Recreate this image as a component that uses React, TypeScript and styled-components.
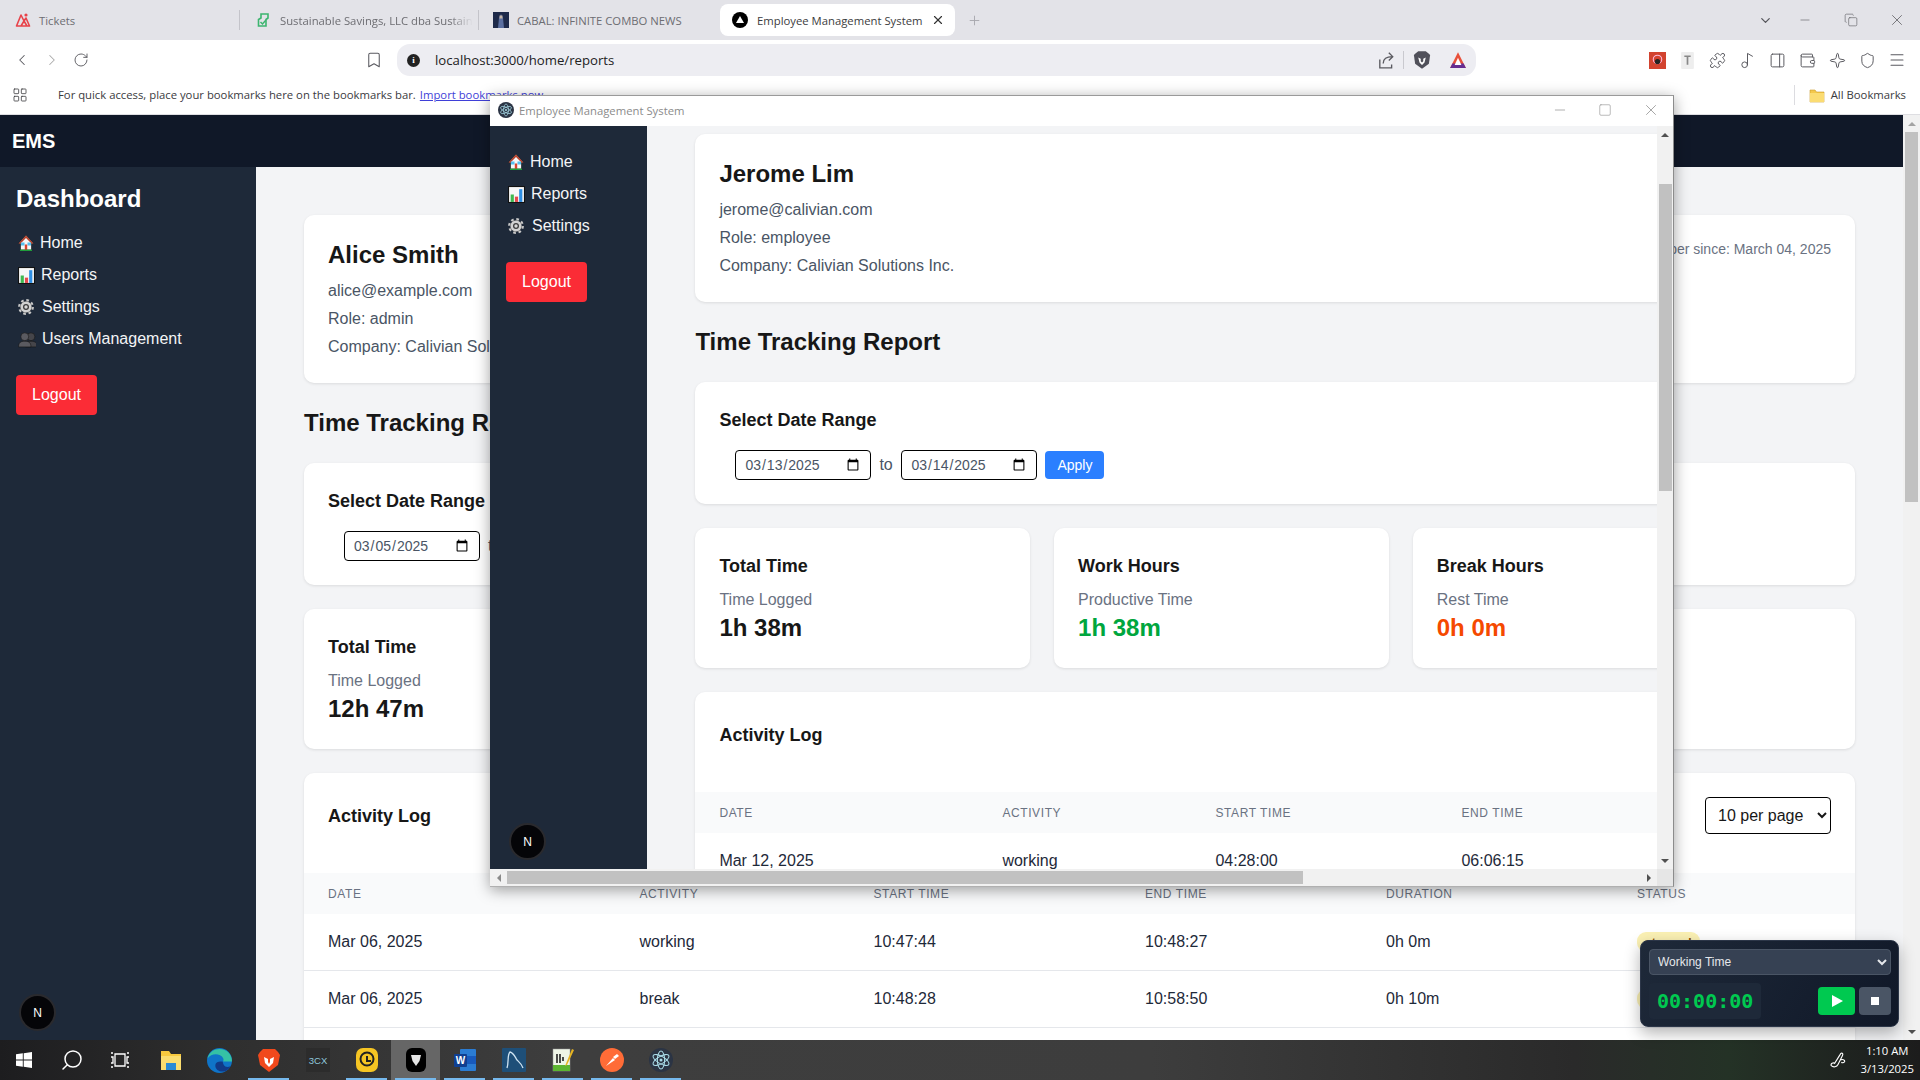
import React from "react";
import styled, { createGlobalStyle } from "styled-components";
import {
  ChevronLeft, ChevronRight, RotateCw, Bookmark, Puzzle, Music2, PanelRight, Wallet,
  Sparkle, Shield, Menu, Minus, Square, Copy, X, ChevronDown, Plus, LayoutGrid, Search,
} from "lucide-react";

const GlobalStyle = createGlobalStyle`
  html, body { margin: 0; padding: 0; overflow: hidden; background: #fff; }
  body { font-family: "Liberation Sans", Arial, sans-serif; }
  * { box-sizing: border-box; }
`;

/* ---------- Screen ---------- */
const Screen = styled.div`
  position: relative;
  width: 1920px;
  height: 1080px;
  display: flex;
  flex-direction: column;
  overflow: hidden;
`;

/* ---------- Browser chrome ---------- */
const TabStrip = styled.div`
  height: 40px;
  background: #e3e3e8;
  display: flex;
  align-items: center;
  font-family: "Open Sans", "Noto Sans", sans-serif;
  font-size: 11.3px;
  color: #6d6d72;
`;
const Tab = styled.div<{ $w: number; $sep?: boolean; $pad: number }>`
  width: ${(p) => p.$w}px;
  height: 20px;
  padding-left: ${(p) => p.$pad}px;
  display: flex;
  align-items: center;
  gap: 8px;
  white-space: nowrap;
  overflow: hidden;
  border-right: ${(p) => (p.$sep ? "1px solid #c4c4ca" : "none")};
`;
const TabLabel = styled.span<{ $fade?: boolean }>`
  display: block;
  ${(p) => (p.$fade ? "mask-image: linear-gradient(90deg, #000 88%, transparent 100%);" : "")}
`;
const ActiveTab = styled.div`
  width: 235px;
  height: 32px;
  margin-left: 8px;
  padding: 0 10px 0 12px;
  background: #fff;
  border-radius: 8px;
  display: flex;
  align-items: center;
  gap: 9px;
  color: #3c3c40;
  white-space: nowrap;
`;
const TabClose = styled.span`
  margin-left: auto;
  display: flex;
  color: #333;
`;
const NewTab = styled.span`
  margin-left: 12px;
  display: flex;
  align-items: center;
  color: #a8a8ae;
`;
const WindowButtons = styled.div`
  margin-left: auto;
  height: 40px;
  display: flex;
  align-items: center;
  color: #55555a;
`;
const WindowButton = styled.span<{ $w: number }>`
  width: ${(p) => p.$w}px;
  display: flex;
  justify-content: center;
`;
const Toolbar = styled.div`
  height: 40px;
  background: #fff;
  display: flex;
  align-items: center;
  color: #5a5a60;
`;
const NavCluster = styled.div`
  width: 397px;
  padding: 0 14px 0 13px;
  display: flex;
  align-items: center;
  gap: 12px;
`;
const BookmarkWrap = styled.span`
  margin-left: auto;
  display: flex;
`;
const AddressBar = styled.div`
  width: 1079px;
  height: 32px;
  background: #ededf2;
  border-radius: 13px;
  display: flex;
  align-items: center;
  padding: 0 9px 0 10px;
  font-family: "Open Sans", "Noto Sans", sans-serif;
  font-size: 13.2px;
  color: #222;
  gap: 15px;
`;
const InfoDot = styled.span`
  width: 13px;
  height: 13px;
  border-radius: 50%;
  background: #222;
  color: #fff;
  font: bold 9px/13px "Liberation Serif", serif;
  text-align: center;
`;
const AddressTools = styled.div`
  margin-left: auto;
  display: flex;
  align-items: center;
  gap: 8px;
`;
const ToolDivider = styled.span`
  width: 1px;
  height: 18px;
  background: #c9c9cf;
`;
const LionGap = styled.span`
  width: 1px;
`;
const Extensions = styled.div`
  flex: 1;
  display: flex;
  justify-content: flex-end;
  align-items: center;
  padding-right: 8px;
`;
const ExtSlot = styled.span`
  width: 30px;
  display: flex;
  justify-content: center;
`;
const BookmarksBar = styled.div`
  height: 35px;
  background: #fff;
  border-bottom: 1px solid #dedee2;
  display: flex;
  align-items: center;
  padding: 0 14px 5px 12px;
  font-family: "Open Sans", "Noto Sans", sans-serif;
  font-size: 11.3px;
  color: #3a3a3e;
  white-space: nowrap;
`;
const BookmarkHint = styled.span`
  margin-left: 30px;
`;
const ImportLink = styled.span`
  margin-left: 4px;
  color: #3f3fd8;
  text-decoration: underline;
`;
const AllBookmarks = styled.div`
  margin-left: auto;
  height: 20px;
  display: flex;
  align-items: center;
  gap: 6px;
  border-left: 1px solid #dcdce0;
  padding-left: 14px;
`;

/* ---------- Page ---------- */
const PageViewport = styled.div`
  flex: 1;
  min-height: 0;
  display: flex;
`;
const PageColumn = styled.div`
  flex: 1;
  min-width: 0;
  display: flex;
  flex-direction: column;
`;
const AppHeader = styled.header`
  height: 52px;
  background: #101828;
  color: #fff;
  padding: 0 12px;
  display: flex;
  align-items: center;
  font-size: 20px;
  font-weight: bold;
`;
const AppBody = styled.div`
  flex: 1;
  min-height: 0;
  display: flex;
`;
const Sidebar = styled.aside<{ $w: number; $top: number }>`
  position: relative;
  flex: 0 0 ${(p) => p.$w}px;
  width: ${(p) => p.$w}px;
  background: #1e2939;
  color: #fff;
  padding: ${(p) => p.$top}px 16px 0;
`;
const SideTitle = styled.h2`
  margin: 0 0 12px;
  font-size: 24px;
  line-height: 32px;
  font-weight: bold;
`;
const NavItem = styled.div<{ $gap: number }>`
  height: 32px;
  display: flex;
  align-items: center;
  padding-left: 2px;
  gap: ${(p) => p.$gap}px;
  font-size: 16px;
  color: #f3f4f6;
`;
const LogoutButton = styled.button`
  display: block;
  margin-top: 20px;
  width: 81px;
  height: 40px;
  border: 0;
  border-radius: 4px;
  background: #fb2c36;
  color: #fff;
  font: 16px "Liberation Sans", Arial, sans-serif;
`;
const DevBadge = styled.div`
  position: absolute;
  left: 19px;
  bottom: 9px;
  width: 37px;
  height: 37px;
  border-radius: 50%;
  background: #050508;
  border: 2px solid #2a2a2e;
  color: #fff;
  font-size: 12px;
  display: flex;
  align-items: center;
  justify-content: center;
`;
const Main = styled.main<{ $top: number }>`
  flex: 1;
  min-width: 0;
  background: #f3f4f6;
  padding: ${(p) => p.$top}px 48px 0;
  overflow: hidden;
`;
const MainInner = styled.div<{ $w?: number }>`
  width: ${(p) => (p.$w ? `${p.$w}px` : "100%")};
  display: flex;
  flex-direction: column;
  gap: 24px;
`;
const Card = styled.section`
  background: #fff;
  border-radius: 10px;
  box-shadow: 0 1px 3px rgba(0, 0, 0, 0.1);
  padding: 24px;
`;
const ProfileCard = styled(Card)`
  display: flex;
  justify-content: space-between;
  align-items: flex-start;
  height: 168px;
`;
const UserName = styled.h1`
  margin: 0 0 8px;
  font-size: 24px;
  line-height: 32px;
  font-weight: bold;
  color: #171717;
`;
const UserLine = styled.p`
  margin: 0 0 4px;
  font-size: 16px;
  line-height: 24px;
  color: #4a5565;
`;
const MemberSince = styled.span`
  font-size: 14px;
  line-height: 20px;
  color: #6a7282;
`;
const SectionTitle = styled.h2`
  margin: 0;
  font-size: 24px;
  line-height: 32px;
  font-weight: bold;
  color: #171717;
`;
const CardTitle = styled.h3`
  margin: 0;
  font-size: 18px;
  line-height: 28px;
  font-weight: bold;
  color: #171717;
`;
const DateRow = styled.div`
  margin-top: 16px;
  padding-left: 16px;
  display: flex;
  align-items: center;
  gap: 8px;
  font-size: 16px;
  color: #4a5565;
`;
const DateInput = styled.input`
  width: 136px;
  height: 30px;
  padding: 0 8px;
  border: 1px solid #000;
  border-radius: 4px;
  background: #fff;
  color: #4a5565;
  font: 14px "Liberation Sans", Arial, sans-serif;
`;
const RangeWord = styled.span`
  width: 14px;
`;
const ApplyButton = styled.button`
  height: 28px;
  padding: 0 12px;
  border: 0;
  border-radius: 4px;
  background: #2b7fff;
  color: #fff;
  font: 14px "Liberation Sans", Arial, sans-serif;
`;
const StatGrid = styled.div<{ $w?: number }>`
  width: ${(p) => (p.$w ? `${p.$w}px` : "100%")};
  display: grid;
  grid-template-columns: repeat(3, 1fr);
  gap: 24px;
`;
const StatNote = styled.div`
  margin-top: 8px;
  font-size: 16px;
  line-height: 24px;
  color: #6a7282;
`;
const StatValue = styled.div<{ $color: string }>`
  font-size: 24px;
  line-height: 32px;
  font-weight: bold;
  color: ${(p) => p.$color};
`;
const ActivityCard = styled.section`
  background: #fff;
  border-radius: 10px 10px 0 0;
  box-shadow: 0 1px 3px rgba(0, 0, 0, 0.1);
  padding-bottom: 24px;
`;
const ActivityHead = styled.div`
  height: 100px;
  padding: 24px 24px 0;
  display: flex;
  justify-content: space-between;
  align-items: flex-start;
`;
const ActivityTitle = styled(CardTitle)`
  line-height: 39px;
`;
const PerPage = styled.select`
  width: 126px;
  height: 37px;
  padding: 0 8px 0 8px;
  border: 1px solid #000;
  border-radius: 4px;
  background: #fff;
  color: #171717;
  font: 16px "Liberation Sans", Arial, sans-serif;
`;
const TableRow = styled.div<{ $cols: string; $head?: boolean }>`
  display: grid;
  grid-template-columns: ${(p) => p.$cols};
  align-items: center;
  padding-left: 24px;
  height: ${(p) => (p.$head ? 41 : 57)}px;
  background: ${(p) => (p.$head ? "#f9fafb" : "#fff")};
  border-bottom: ${(p) => (p.$head ? "none" : "1px solid #e5e7eb")};
  font-size: ${(p) => (p.$head ? 12 : 16)}px;
  letter-spacing: ${(p) => (p.$head ? "0.6px" : "0")};
  text-transform: ${(p) => (p.$head ? "uppercase" : "none")};
  color: ${(p) => (p.$head ? "#6a7282" : "#1e2939")};
`;
const StatusBadge = styled.span`
  justify-self: start;
  padding: 0 8px;
  height: 20px;
  line-height: 22px;
  border-radius: 9px;
  background: #fbf1b4;
  color: #894b00;
  font-size: 12px;
  font-weight: bold;
`;

/* ---------- Scrollbars ---------- */
const VTrack = styled.div<{ $w: number }>`
  flex: 0 0 ${(p) => p.$w}px;
  width: ${(p) => p.$w}px;
  background: #f1f1f1;
  display: flex;
  flex-direction: column;
`;
const VThumb = styled.div<{ $top: number; $h: number }>`
  margin: ${(p) => p.$top}px auto auto;
  width: 13px;
  height: ${(p) => p.$h}px;
  background: #c1c1c1;
`;
const ArrowBox = styled.div<{ $dir: "up" | "down" | "left" | "right"; $c: string }>`
  flex: 0 0 17px;
  width: ${(p) => (p.$dir === "up" || p.$dir === "down" ? "100%" : "17px")};
  height: ${(p) => (p.$dir === "up" || p.$dir === "down" ? "17px" : "100%")};
  display: flex;
  align-items: center;
  justify-content: center;
  &::before {
    content: "";
    width: 0;
    height: 0;
    border: 4px solid transparent;
    ${(p) =>
      p.$dir === "up"
        ? `border-bottom-color:${p.$c};border-top-width:0;`
        : p.$dir === "down"
        ? `border-top-color:${p.$c};border-bottom-width:0;`
        : p.$dir === "left"
        ? `border-right-color:${p.$c};border-left-width:0;`
        : `border-left-color:${p.$c};border-right-width:0;`}
  }
`;
const HTrack = styled.div`
  height: 17px;
  background: #f1f1f1;
  display: flex;
`;
const HThumb = styled.div<{ $w: number }>`
  width: ${(p) => p.$w}px;
  height: 13px;
  margin-top: 2px;
  margin-right: auto;
  background: #c1c1c1;
`;

/* ---------- Electron window (floating on the desktop) ---------- */
const AppWindow = styled.div`
  position: absolute;
  left: 490px;
  top: 95px;
  width: 1184px;
  height: 792px;
  background: #fff;
  border-top: 1px solid #9a9a9a;
  border-right: 1px solid #8c8c8c;
  border-bottom: 1px solid #b0b0b0;
  box-shadow: 0 3px 14px rgba(0, 0, 0, 0.38);
  display: flex;
  flex-direction: column;
`;
const WindowTitleBar = styled.div`
  height: 30px;
  flex: none;
  padding: 0 13px 2px 8px;
  display: flex;
  align-items: center;
  gap: 5px;
  background: #fff;
  font-family: "Open Sans", "Noto Sans", sans-serif;
  font-size: 11.3px;
  color: #8b8b8b;
`;
const WindowControls = styled.div`
  margin-left: auto;
  display: flex;
  align-items: center;
  gap: 30px;
  color: #8a8a8a;
`;
const WindowGrid = styled.div`
  flex: 1;
  min-height: 0;
  display: grid;
  grid-template-columns: 1fr 16px;
  grid-template-rows: 1fr 17px;
`;
const WindowApp = styled.div`
  min-width: 0;
  min-height: 0;
  display: flex;
  overflow: hidden;
`;
const ScrollCorner = styled.div`
  background: #e6e6e6;
`;

/* ---------- Timer widget ---------- */
const TimerWidget = styled.div`
  position: absolute;
  left: 1640px;
  top: 940px;
  width: 259px;
  height: 87px;
  padding: 8px 7px 0 8px;
  border-radius: 8px;
  border: 1px solid #2c3648;
  background: linear-gradient(120deg, #1e2939, #101828);
  box-shadow: 0 6px 16px rgba(0, 0, 0, 0.3);
  display: flex;
  flex-direction: column;
  gap: 8px;
`;
const TimerSelect = styled.select`
  width: 100%;
  height: 26px;
  flex: none;
  padding: 0 3px 0 4px;
  border: 1px solid #4a5565;
  border-radius: 4px;
  background: #364153;
  color: #e5e7eb;
  font: 12px "Liberation Sans", Arial, sans-serif;
`;
const TimerRow = styled.div`
  display: flex;
  align-items: center;
`;
const TimeDisplay = styled.div`
  width: 112px;
  height: 36px;
  padding-left: 8px;
  border-radius: 4px;
  background: #1e2939;
  color: #00c950;
  font: bold 20px/36px "DejaVu Sans Mono", monospace;
`;
const TimerButtons = styled.div`
  margin-left: auto;
  display: flex;
  gap: 4px;
`;
const TimerButton = styled.button<{ $w: number; $bg: string }>`
  width: ${(p) => p.$w}px;
  height: 28px;
  border: 0;
  border-radius: 4px;
  padding: 0;
  background: ${(p) => p.$bg};
  display: flex;
  align-items: center;
  justify-content: center;
`;

/* ---------- Taskbar ---------- */
const Taskbar = styled.footer`
  height: 40px;
  flex: none;
  display: flex;
  align-items: stretch;
  background: linear-gradient(90deg, #1d1d1f 0%, #2f2f2f 12%, #3e3e3e 30%, #3d3d3d 60%, #2a2a2a 82%, #243226 90%, #1f2420 96%, #1c1c1c 100%);
  color: #fff;
`;
const TaskSlot = styled.div<{ $active?: boolean; $open?: boolean; $w?: number }>`
  position: relative;
  width: ${(p) => p.$w ?? 49}px;
  display: flex;
  align-items: center;
  justify-content: center;
  background: ${(p) => (p.$active ? "#666" : "transparent")};
  &::after {
    content: "";
    display: ${(p) => (p.$open ? "block" : "none")};
    position: absolute;
    left: 4px;
    right: 4px;
    bottom: 0;
    height: 2px;
    background: #76b9ed;
  }
`;
const Tray = styled.div`
  margin-left: auto;
  display: flex;
  align-items: center;
  gap: 13px;
  padding-right: 6px;
`;
const Clock = styled.div`
  font-family: "Open Sans", "Noto Sans", sans-serif;
  font-size: 11.3px;
  line-height: 18px;
  text-align: center;
`;

/* ---------- Drawn icons ---------- */
const Ico = ({ s = 16, v = 16, children }: { s?: number; v?: number; children: React.ReactNode }) => (
  <svg width={s} height={s} viewBox={`0 0 ${v} ${v}`} style={{ flex: "none", display: "block" }}>{children}</svg>
);
const TicketsIcon = () => (
  <Ico>
    <path d="M1.5 14 6 3l3 6 2-3 3.5 8zM6 14l3-5 3 5" fill="none" stroke="#e8434a" strokeWidth="1.6" strokeLinejoin="round" />
    <circle cx="11" cy="3" r="1.6" fill="#e8434a" />
  </Ico>
);
const SavingsIcon = () => (
  <Ico>
    <path d="M5 2h7v4l-2 1.5V14H2.5V7.5L5 6z" fill="none" stroke="#3cb56f" strokeWidth="1.6" />
    <path d="m4.5 10 2 2 3.500-4" fill="none" stroke="#3cb56f" strokeWidth="1.5" />
  </Ico>
);
const CabalIcon = () => (
  <Ico>
    <rect width="16" height="16" fill="#1e2a4a" />
    <path d="M5 16 6 6l2-4 2 4 1 10z" fill="#5b6fa0" />
    <rect x="6.500" y="3.500" width="3" height="3" fill="#c6b6a6" />
  </Ico>
);
const NextTabIcon = () => (
  <Ico>
    <circle cx="8" cy="8" r="8" fill="#000" />
    <path d="M8 4 12 11H4z" fill="#fff" />
  </Ico>
);
const ShareIcon = () => (
  <Ico s={18}>
    <path d="M2.500 7.500V15H13V12M5.500 11c0-4 3-6 8-6M10.500 1.500 14 5l-3.500 3.500" fill="none" stroke="#5a5a60" strokeWidth="1.200" />
  </Ico>
);
const LionIcon = ({ color = "#50505a", s = 20 }: { color?: string; s?: number }) => (
  <Ico s={s}>
    <path d="M3 2.500 5 1h6l2 1.500 1.500 1.500-1 7L8 15l-5.500-4-1-7z" fill={color} />
    <path d="M5 6l2 1v2l1 1 1-1V7l2-1-1 4-2 2-2-2z" fill="#fff" />
  </Ico>
);
const BatIcon = () => (
  <Ico s={18}>
    <path d="M8 1 15 15H1z" fill="#e8503a" />
    <path d="M1 15h14l-2-4H3z" fill="#662d91" />
    <path d="M8 6 11 12.500H5z" fill="#fff" />
  </Ico>
);
const RedExtIcon = () => (
  <Ico s={17}>
    <rect width="16" height="16" fill="#d2432f" />
    <circle cx="8" cy="7" r="4" fill="none" stroke="#fbd" strokeWidth="1" />
    <circle cx="8" cy="9" r="2.500" fill="#222" />
  </Ico>
);
const TExtIcon = () => (
  <Ico s={17}>
    <rect x="2" y="0" width="12" height="16" rx="1" fill="#eee" />
    <path d="M5 4h6M8 4v8" stroke="#888" strokeWidth="1.600" fill="none" />
  </Ico>
);
const FolderIcon = ({ s = 16 }: { s?: number }) => (
  <Ico s={s}>
    <path d="M1 3h5l1.500 2H15v10H1z" fill="#f4c84b" stroke="#c99a2e" strokeWidth=".6" />
    <rect x="1" y="6" width="14" height="9" fill="#fbdc72" />
  </Ico>
);
const HomeEmoji = () => (
  <Ico s={16}>
    <path d="M8 .5 15.500 8.500H13.500V15H2.500V8.500H.5z" fill="#f7f7f7" stroke="#111" strokeWidth=".6" />
    <path d="M8 .5 15.500 8.500 13.500 8.500 8 3 2.500 8.500H.5z" fill="#b8412b" />
    <rect x="3" y="7.500" width="3.500" height="3" fill="#55c0ee" />
    <rect x="9.500" y="7.500" width="3.500" height="3" fill="#55c0ee" />
    <rect x="6.800" y="9.500" width="2.400" height="5.500" fill="#d9442e" />
    <rect x="2" y="14.600" width="12" height="1.400" fill="#1f9d3a" />
  </Ico>
);
const ChartEmoji = () => (
  <Ico s={17}>
    <rect x=".5" y=".5" width="15" height="15" fill="#f7f7f7" stroke="#111" />
    <rect x="2.500" y="8" width="3" height="7" fill="#3fb950" />
    <rect x="6.500" y="10" width="3" height="5" fill="#e5484d" />
    <rect x="10.500" y="3" width="3" height="12" fill="#2f8fe5" />
  </Ico>
);
const GearEmoji = () => (
  <Ico s={16}>
    <circle cx="8" cy="8" r="6.600" fill="none" stroke="#c9c9c9" strokeWidth="2.600" strokeDasharray="2.600 2.600" />
    <circle cx="8" cy="8" r="5.800" fill="#d2d2d2" stroke="#333" strokeWidth=".4" />
    <circle cx="8" cy="8" r="3" fill="#3c3c3c" />
    <circle cx="8" cy="8" r="1.700" fill="#d8d8d8" />
  </Ico>
);
const UsersEmoji = () => (
  <Ico s={18}>
    <circle cx="11.500" cy="6" r="3.500" fill="#45454a" stroke="#111" strokeWidth=".5" />
    <path d="M6.500 15c0-4 2-5 5-5s6 1 6 5z" fill="#45454a" stroke="#111" strokeWidth=".5" />
    <circle cx="6" cy="6" r="3.500" fill="#5a5a60" stroke="#111" strokeWidth=".5" />
    <path d="M.5 15c0-4 2-5 5.500-5s5.500 1 5.500 5z" fill="#5a5a60" stroke="#111" strokeWidth=".5" />
  </Ico>
);
const ElectronIcon = ({ s = 16, bg = "#2b3444" }: { s?: number; bg?: string }) => (
  <Ico s={s}>
    <circle cx="8" cy="8" r="8" fill={bg} />
    <g fill="none" stroke="#a9dbe8" strokeWidth=".7">
      <ellipse cx="8" cy="8" rx="6" ry="2.400" transform="rotate(30 8 8)" />
      <ellipse cx="8" cy="8" rx="6" ry="2.400" transform="rotate(-30 8 8)" />
      <ellipse cx="8" cy="8" rx="6" ry="2.400" transform="rotate(90 8 8)" />
    </g>
    <circle cx="8" cy="8" r="1" fill="#a9dbe8" />
  </Ico>
);
const WindowsLogo = () => (
  <Ico s={16}>
    <path d="M0 2.300 6.800 1.300V7.600H0zM7.700 1.200 16 0V7.600H7.700zM0 8.400H6.800V14.700L0 13.700zM7.700 8.400H16V16L7.700 14.800z" fill="#fff" />
  </Ico>
);
const TaskViewIcon = () => (
  <Ico s={20} v={20}>
    <path d="M5 4h10v12H5zM1 3h2M1 17h2M17 3h2M17 17h2M1 7h2v6H1M19 7h-2v6h2" fill="none" stroke="#fff" strokeWidth="1.300" />
  </Ico>
);
const ExplorerIcon = () => (
  <Ico s={24} v={24}>
    <path d="M2 3h8l2 3h10v16H2z" fill="#f8c93e" />
    <rect x="2" y="8" width="20" height="14" fill="#fbdd6f" />
    <rect x="7" y="15" width="10" height="7" fill="#2a8ad4" />
  </Ico>
);
const EdgeIcon = () => (
  <Ico s={25} v={24}>
    <circle cx="12" cy="12" r="12" fill="#0f74c8" />
    <path d="M24 13c0-7-5-12-12-12C7 1 2 4 .5 10c3-4 8-5 12-3 3 1.500 4 4 3 6h8z" fill="#35c1a5" />
    <path d="M15 13c-3 0-7 0-7 4s5 7 10 5c2-1 4-3 5-5-3 2-7 2-8-4z" fill="#113a87" />
  </Ico>
);
const BraveIcon = () => (
  <Ico s={24} v={24}>
    <path d="M6 1h12l3 3 2 3-2 10-9 7-9-7L1 7l2-3z" fill="#f1491c" />
    <path d="M7 9l4 2v3l1 2 1-2v-3l4-2-1 6-4 4-4-4z" fill="#fff" />
  </Ico>
);
const ThreeCxIcon = () => (
  <Ico s={24} v={24}>
    <rect width="24" height="24" fill="#2c2c2c" />
    <text x="12" y="15.500" textAnchor="middle" fontFamily="Liberation Sans" fontSize="9.500" fill="#8fc8dc">3CX</text>
  </Ico>
);
const YellowAppIcon = () => (
  <Ico s={24} v={24}>
    <rect x="1" width="22" height="24" rx="7" fill="#f6c523" />
    <circle cx="12" cy="11" r="6.500" fill="none" stroke="#222" strokeWidth="2" />
    <path d="M11 8h2v4h3v2h-5z" fill="#222" />
  </Ico>
);
const BlackAppIcon = () => (
  <Ico s={24} v={24}>
    <rect x="2" width="20" height="24" rx="6" fill="#000" />
    <path d="M7 7h10l-1.500 6-3.500 5-3.500-5z" fill="#e5e5e5" />
  </Ico>
);
const WordIcon = () => (
  <Ico s={24} v={24}>
    <rect x="7" y="1" width="16" height="22" rx="1" fill="#2b7cd3" />
    <rect x="7" y="8" width="16" height="8" fill="#185abd" />
    <rect x="1" y="6" width="13" height="13" rx="1" fill="#103f91" />
    <text x="7.500" y="16" textAnchor="middle" fontFamily="Liberation Sans" fontSize="10" fontWeight="bold" fill="#fff">W</text>
  </Ico>
);
const MySqlIcon = () => (
  <Ico s={24} v={24}>
    <rect width="24" height="24" rx="1" fill="#1e4f78" />
    <path d="M5 20c2-6 0-13 3-16 4 1 5 5 7 8 2 2 4 3 6 8" fill="none" stroke="#cfe4f2" strokeWidth="1.300" />
  </Ico>
);
const NotepadIcon = () => (
  <Ico s={24} v={24}>
    <rect x="2" y="1" width="17" height="22" fill="#eef5e6" stroke="#999" strokeWidth=".5" />
    <rect x="2" y="17" width="17" height="6" fill="#5cb531" />
    <path d="M6 6v9M9 6v9M12 9v4" stroke="#222" strokeWidth="1.600" />
    <path d="M21 1l2 1-7 15-2 1z" fill="#e6b422" />
  </Ico>
);
const PostmanIcon = () => (
  <Ico s={24} v={24}>
    <circle cx="12" cy="12" r="12" fill="#ff6c37" />
    <path d="M6 18l7-8 2 2zM13 9l4-3 2 2-4 3z" fill="#fff" />
  </Ico>
);
const PlayIcon = () => (
  <Ico s={12} v={12}><path d="M1 0v12l11-6z" fill="#fff" /></Ico>
);
const StopIcon = () => (
  <Ico s={8} v={8}><rect width="8" height="8" fill="#fff" /></Ico>
);
const PenIcon = () => (
  <Ico s={18}>
    <path d="M2 13c-1-2 2-3 3-2l5-8c1-2 3-1 2 1l-4 8c-1 2-4 3-6 1zM10 8c2-1 4 0 4 1s-2 2-3 1" fill="none" stroke="#fff" strokeWidth="1" />
  </Ico>
);

/* ---------- Data ---------- */
type Stat = { title: string; note: string; value: string; color: string };
type Row = string[];
const pageCols = "311.5px 234px 271.5px 241px 251px 1fr";
const windowCols = "283px 213px 246px 240px";
const headers = ["Date", "Activity", "Start Time", "End Time", "Duration", "Status"];
const aliceStats: Stat[] = [
  { title: "Total Time", note: "Time Logged", value: "12h 47m", color: "#171717" },
  { title: "Work Hours", note: "Productive Time", value: "11h 52m", color: "#00a63e" },
  { title: "Break Hours", note: "Rest Time", value: "0h 55m", color: "#f54900" },
];
const jeromeStats: Stat[] = [
  { title: "Total Time", note: "Time Logged", value: "1h 38m", color: "#171717" },
  { title: "Work Hours", note: "Productive Time", value: "1h 38m", color: "#00a63e" },
  { title: "Break Hours", note: "Rest Time", value: "0h 0m", color: "#f54900" },
];
const aliceRows: Row[] = [
  ["Mar 06, 2025", "working", "10:47:44", "10:48:27", "0h 0m"],
  ["Mar 06, 2025", "break", "10:48:28", "10:58:50", "0h 10m"],
];
const jeromeRows: Row[] = [["Mar 12, 2025", "working", "04:28:00", "06:06:15"]];

type ReportProps = {
  name: string; email: string; role: string; from: string; to: string;
  stats: Stat[]; rows: Row[]; cols: string; width?: number; statWidth?: number; full?: boolean;
};
const Report = ({ name, email, role, from, to, stats, rows, cols, width, statWidth, full }: ReportProps) => (
  <MainInner $w={width}>
    <ProfileCard>
      <div>
        <UserName>{name}</UserName>
        <UserLine>{email}</UserLine>
        <UserLine>Role: {role}</UserLine>
        <UserLine>Company: Calivian Solutions Inc.</UserLine>
      </div>
      {full && <MemberSince>Member since: March 04, 2025</MemberSince>}
    </ProfileCard>
    <SectionTitle>Time Tracking Report</SectionTitle>
    <Card>
      <CardTitle>Select Date Range</CardTitle>
      <DateRow>
        <DateInput type="date" defaultValue={from} />
        <RangeWord>to</RangeWord>
        <DateInput type="date" defaultValue={to} />
        <ApplyButton>Apply</ApplyButton>
      </DateRow>
    </Card>
    <StatGrid $w={statWidth}>
      {stats.map((s) => (
        <Card key={s.title}>
          <CardTitle>{s.title}</CardTitle>
          <StatNote>{s.note}</StatNote>
          <StatValue $color={s.color}>{s.value}</StatValue>
        </Card>
      ))}
    </StatGrid>
    <ActivityCard>
      <ActivityHead>
        <ActivityTitle>Activity Log</ActivityTitle>
        {full && <PerPage defaultValue="10"><option value="10">10 per page</option></PerPage>}
      </ActivityHead>
      <TableRow $cols={cols} $head>
        {(full ? headers : headers.slice(0, 4)).map((h) => <span key={h}>{h}</span>)}
      </TableRow>
      {rows.map((r, i) => (
        <TableRow $cols={cols} key={i}>
          {r.map((c, j) => <span key={j}>{c}</span>)}
          {full && <StatusBadge>stopped</StatusBadge>}
        </TableRow>
      ))}
    </ActivityCard>
  </MainInner>
);

const NavList = ({ admin }: { admin?: boolean }) => (
  <>
    <NavItem $gap={6}><HomeEmoji />Home</NavItem>
    <NavItem $gap={6}><ChartEmoji />Reports</NavItem>
    <NavItem $gap={8}><GearEmoji />Settings</NavItem>
    {admin && <NavItem $gap={6}><UsersEmoji />Users Management</NavItem>}
    <LogoutButton>Logout</LogoutButton>
  </>
);

export default function App() {
  const stroke = 1.4;
  return (
    <Screen>
      <GlobalStyle />
      <TabStrip>
        <Tab $w={240} $pad={15} $sep><TicketsIcon /><TabLabel>Tickets</TabLabel></Tab>
        <Tab $w={239} $pad={16} $sep><SavingsIcon /><TabLabel $fade>Sustainable Savings, LLC dba Sustain</TabLabel></Tab>
        <Tab $w={233} $pad={14}><CabalIcon /><TabLabel>CABAL: INFINITE COMBO NEWS</TabLabel></Tab>
        <ActiveTab>
          <NextTabIcon /><span>Employee Management System</span>
          <TabClose><X size={14} strokeWidth={2} style={{ marginRight: 1 }} /></TabClose>
        </ActiveTab>
        <NewTab><Plus size={15} strokeWidth={1.5} /></NewTab>
        <WindowButtons>
          <WindowButton $w={34}><ChevronDown size={15} strokeWidth={2} /></WindowButton>
          <WindowButton $w={46}><Minus size={14} strokeWidth={1} /></WindowButton>
          <WindowButton $w={46}><Copy size={14} strokeWidth={1} /></WindowButton>
          <WindowButton $w={46}><X size={18} strokeWidth={1} /></WindowButton>
        </WindowButtons>
      </TabStrip>
      <Toolbar>
        <NavCluster>
          <ChevronLeft size={18} strokeWidth={stroke} />
          <ChevronRight size={18} strokeWidth={stroke} color="#aaa" />
          <RotateCw size={16} strokeWidth={stroke} />
          <BookmarkWrap><Bookmark size={18} strokeWidth={stroke} /></BookmarkWrap>
        </NavCluster>
        <AddressBar>
          <InfoDot>i</InfoDot>
          <span>localhost:3000/home/reports</span>
          <AddressTools>
            <ShareIcon />
            <ToolDivider />
            <LionIcon />
            <LionGap />
            <BatIcon />
          </AddressTools>
        </AddressBar>
        <Extensions>
          <ExtSlot><RedExtIcon /></ExtSlot>
          <ExtSlot><TExtIcon /></ExtSlot>
          <ExtSlot><Puzzle size={17} strokeWidth={stroke} /></ExtSlot>
          <ExtSlot><Music2 size={17} strokeWidth={stroke} /></ExtSlot>
          <ExtSlot><PanelRight size={17} strokeWidth={stroke} /></ExtSlot>
          <ExtSlot><Wallet size={17} strokeWidth={stroke} /></ExtSlot>
          <ExtSlot><Sparkle size={17} strokeWidth={stroke} /></ExtSlot>
          <ExtSlot><Shield size={17} strokeWidth={stroke} /></ExtSlot>
          <ExtSlot><Menu size={18} strokeWidth={stroke} /></ExtSlot>
        </Extensions>
      </Toolbar>
      <BookmarksBar>
        <LayoutGrid size={16} strokeWidth={1.2} />
        <BookmarkHint>For quick access, place your bookmarks here on the bookmarks bar.</BookmarkHint>
        <ImportLink>Import bookmarks now...</ImportLink>
        <AllBookmarks><FolderIcon />All Bookmarks</AllBookmarks>
      </BookmarksBar>

      <PageViewport>
        <PageColumn>
          <AppHeader>EMS</AppHeader>
          <AppBody>
            <Sidebar $w={256} $top={16}>
              <SideTitle>Dashboard</SideTitle>
              <NavList admin />
              <DevBadge>N</DevBadge>
            </Sidebar>
            <Main $top={48}>
              <Report name="Alice Smith" email="alice@example.com" role="admin" from="2025-03-05" to="2025-03-06"
                stats={aliceStats} rows={aliceRows} cols={pageCols} full />
            </Main>
          </AppBody>
        </PageColumn>
        <VTrack $w={17}>
          <ArrowBox $dir="up" $c="#a3a3a3" />
          <VThumb $top={0} $h={370} />
          <ArrowBox $dir="down" $c="#505050" />
        </VTrack>
      </PageViewport>

      <Taskbar>
        <TaskSlot $w={48}><WindowsLogo /></TaskSlot>
        <TaskSlot $w={48}><Search size={24} strokeWidth={1.5} style={{ transform: "scaleX(-1)" }} /></TaskSlot>
        <TaskSlot $w={47}><TaskViewIcon /></TaskSlot>
        <TaskSlot $w={3} />
        <TaskSlot><ExplorerIcon /></TaskSlot>
        <TaskSlot><EdgeIcon /></TaskSlot>
        <TaskSlot $open><BraveIcon /></TaskSlot>
        <TaskSlot><ThreeCxIcon /></TaskSlot>
        <TaskSlot $open><YellowAppIcon /></TaskSlot>
        <TaskSlot $open $active><BlackAppIcon /></TaskSlot>
        <TaskSlot $open><WordIcon /></TaskSlot>
        <TaskSlot $open><MySqlIcon /></TaskSlot>
        <TaskSlot $open><NotepadIcon /></TaskSlot>
        <TaskSlot $open><PostmanIcon /></TaskSlot>
        <TaskSlot $open><ElectronIcon s={24} /></TaskSlot>
        <Tray>
          <PenIcon />
          <Clock>1:10 AM<br />3/13/2025</Clock>
        </Tray>
      </Taskbar>

      <AppWindow>
        <WindowTitleBar>
          <ElectronIcon />
          <span>Employee Management System</span>
          <WindowControls>
            <Minus size={16} strokeWidth={1} />
            <Square size={14} strokeWidth={1} />
            <X size={18} strokeWidth={1} />
          </WindowControls>
        </WindowTitleBar>
        <WindowGrid>
          <WindowApp>
            <Sidebar $w={157.4} $top={20}>
              <NavList />
              <DevBadge>N</DevBadge>
            </Sidebar>
            <Main $top={8}>
              <Report name="Jerome Lim" email="jerome@calivian.com" role="employee" from="2025-03-13" to="2025-03-14"
                stats={jeromeStats} rows={jeromeRows} cols={windowCols} width={1400} statWidth={1052} />
            </Main>
          </WindowApp>
          <VTrack $w={16}>
            <ArrowBox $dir="up" $c="#505050" />
            <VThumb $top={41} $h={307} />
            <ArrowBox $dir="down" $c="#505050" />
          </VTrack>
          <HTrack>
            <ArrowBox $dir="left" $c="#8a8a8a" />
            <HThumb $w={796} />
            <ArrowBox $dir="right" $c="#505050" />
          </HTrack>
          <ScrollCorner />
        </WindowGrid>
      </AppWindow>

      <TimerWidget>
        <TimerSelect defaultValue="work"><option value="work">Working Time</option></TimerSelect>
        <TimerRow>
          <TimeDisplay>00:00:00</TimeDisplay>
          <TimerButtons>
            <TimerButton $w={37} $bg="#00c950"><PlayIcon /></TimerButton>
            <TimerButton $w={32} $bg="#4a5565"><StopIcon /></TimerButton>
          </TimerButtons>
        </TimerRow>
      </TimerWidget>
    </Screen>
  );
}
